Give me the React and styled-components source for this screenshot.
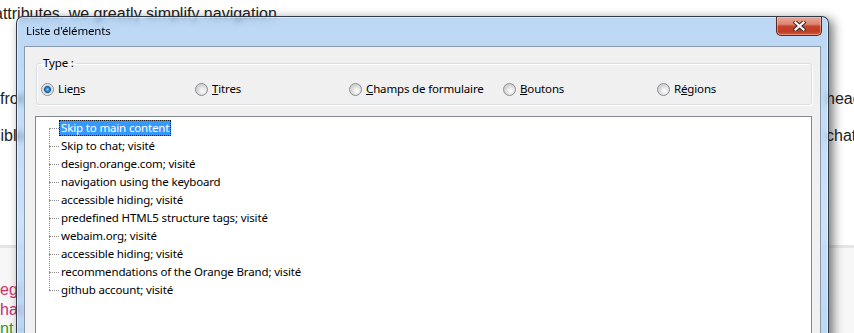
import React from "react";
import styled, { createGlobalStyle } from "styled-components";

const GlobalStyle = createGlobalStyle`
  html, body {
    margin: 0;
    padding: 0;
    background: #fff;
  }
  body {
    width: 854px;
    height: 333px;
    overflow: hidden;
  }
  #root {
    position: relative;
    width: 854px;
    height: 333px;
    overflow: hidden;
  }
`;

/* ---------- page behind the dialog ---------- */

const Page = styled.div`
  height: 333px;
  font-family: "Liberation Sans", Arial, sans-serif;
  font-size: 16px;
  color: #222;
`;

const Article = styled.div`
  height: 245px;
  box-sizing: border-box;
  padding-top: 3px;
  background: #fff;
`;

const Line = styled.p`
  display: grid;
  grid-template-columns: 826px 1fr;
  margin: 0 0 ${(p) => p.$after || 0}px;
  line-height: 22px;
  white-space: nowrap;
`;

const LeftText = styled.span`
  overflow: hidden;
  text-indent: ${(p) => p.$indent || 0}px;
`;

const RightText = styled.span`
  overflow: visible;
`;

const CodeBlock = styled.pre`
  margin: 0;
  height: 88px;
  box-sizing: border-box;
  padding-top: 32px;
  border-top: 3px solid #e6e6e6;
  background: #f7f7f7;
  font-family: "Liberation Sans", Arial, sans-serif;
  font-size: 16px;
  line-height: 19.5px;
`;

const Code = styled.span`
  display: block;
  color: ${(p) => p.$color};
`;

/* ---------- Windows 7 dialog ---------- */

const Window = styled.section`
  position: absolute;
  left: 16px;
  top: 16px;
  width: 813px;
  height: 340px;
  box-sizing: border-box;
  display: flex;
  flex-direction: column;
  border: 1px solid rgba(35, 42, 52, 0.9);
  border-radius: 7px 7px 0 0;
  background: linear-gradient(
    to bottom,
    rgba(150, 192, 238, 0.64),
    rgba(170, 206, 244, 0.6) 60%,
    rgba(152, 196, 244, 0.64)
  );
  backdrop-filter: blur(3px);
  box-shadow: inset 0 0 0 1px rgba(255, 255, 255, 0.5),
    4px 3px 11px rgba(0, 0, 0, 0.55);
  font-family: "Noto Sans", "Open Sans", sans-serif;
  font-size: 11.5px;
  letter-spacing: -0.15px;
  color: #000;
`;

const TitleBar = styled.header`
  display: flex;
  align-items: flex-start;
  height: 29px;
  padding-left: 9px;
`;

const Title = styled.h1`
  margin: 6px 0 0;
  font-size: inherit;
  font-weight: normal;
  line-height: 16px;
`;

const CloseButton = styled.button`
  display: flex;
  align-items: center;
  justify-content: center;
  width: 46px;
  height: 19px;
  margin: 0 6px 0 auto;
  padding: 0;
  border: 1px solid #5b2a22;
  border-top: none;
  border-radius: 0 0 5px 5px;
  background: linear-gradient(
    to bottom,
    #e9a899 0%,
    #dc8470 40%,
    #c5432c 52%,
    #c13c25 80%,
    #d0603f 100%
  );
  box-shadow: inset 0 0 0 1px rgba(255, 210, 200, 0.45);
`;

const Client = styled.div`
  flex: 1;
  margin: 0 7px;
  padding: 8px 8px 0 10px;
  border: 1px solid #8a9bb0;
  border-bottom: none;
  background: #f0f0f0;
`;

const GroupBox = styled.fieldset`
  margin: 0 1px;
  padding: 10px 0 7px 4px;
  border: 1px solid #d5dfe5;
  border-radius: 3px;
  box-shadow: inset 1px 1px 0 #fff, 1px 1px 0 #fff;
`;

const Legend = styled.legend`
  padding: 0 2px;
  line-height: 16px;
`;

const RadioRow = styled.div`
  display: grid;
  grid-template-columns: repeat(5, 154px);
  height: 16px;
`;

const RadioOption = styled.label`
  display: flex;
  align-items: center;
  gap: 4px;
  line-height: 16px;
  white-space: nowrap;
`;

const RadioMark = styled.span`
  flex: none;
  width: 13px;
  height: 13px;
  box-sizing: border-box;
  border-radius: 50%;
  border: 1px solid #8b8e91;
  background: ${(p) =>
    p.$checked
      ? "radial-gradient(circle at 50% 50%, #9bd8fb 0, #3a94d6 1.4px, #1d5a92 3.1px, #c9ced3 3.8px, #f6f6f6 5.6px)"
      : "radial-gradient(circle at 60% 62%, #ffffff 0, #f2f2f2 2px, #d4d4d4 5.6px)"};
`;

const Key = styled.span`
  text-decoration: underline;
`;

const ListBox = styled.div`
  height: 230px;
  margin-top: 11px;
  padding-top: 2px;
  border: 1px solid #828790;
  background: #fff;
`;

const Tree = styled.ul`
  position: relative;
  margin: 0 0 0 13px;
  padding: 0;
  list-style: none;

  &::before {
    content: "";
    position: absolute;
    left: 0;
    top: 9px;
    bottom: 9px;
    border-left: 1px dotted #8c8c8c;
  }
`;

const TreeItem = styled.li`
  display: flex;
  align-items: center;
  height: 18px;

  &::before {
    content: "";
    width: 10px;
    margin-top: 1px;
    border-top: 1px dotted #8c8c8c;
  }
`;

const ItemLabel = styled.span`
  height: 16px;
  box-sizing: border-box;
  padding: 0 1px;
  line-height: 14px;
  white-space: nowrap;
  border: 1px ${(p) => (p.$selected ? "dotted #1a1a1a" : "solid transparent")};
  background: ${(p) => (p.$selected ? "#3399ff" : "transparent")};
  color: ${(p) => (p.$selected ? "#fff" : "#000")};
`;

const types = [
  { label: ["Lie", "n", "s"], checked: true },
  { label: ["", "T", "itres"] },
  { label: ["", "C", "hamps de formulaire"] },
  { label: ["", "B", "outons"] },
  { label: ["R", "é", "gions"] },
];

const links = [
  "Skip to main content",
  "Skip to chat; visité",
  "design.orange.com; visité",
  "navigation using the keyboard",
  "accessible hiding; visité",
  "predefined HTML5 structure tags; visité",
  "webaim.org; visité",
  "accessible hiding; visité",
  "recommendations of the Orange Brand; visité",
  "github account; visité",
];

const CloseGlyph = () => (
  <svg width="13" height="10" viewBox="0 0 13 10">
    <path
      d="M2.5 1.5 L10.5 8.5 M10.5 1.5 L2.5 8.5"
      stroke="#3f2a26"
      strokeWidth="4.2"
      strokeLinecap="square"
    />
    <path
      d="M2.5 1.5 L10.5 8.5 M10.5 1.5 L2.5 8.5"
      stroke="#fff"
      strokeWidth="2.2"
      strokeLinecap="square"
    />
  </svg>
);

export default function App() {
  return (
    <>
      <GlobalStyle />
      <Page>
        <Article>
          <Line $after={63}>
            <LeftText $indent={-6}>attributes, we greatly simplify navigation</LeftText>
            <RightText />
          </Line>
          <Line $after={15}>
            <LeftText>from the main content to the chat and every section</LeftText>
            <RightText>headings</RightText>
          </Line>
          <Line>
            <LeftText $indent={-19}>visible content that screen readers announce to the</LeftText>
            <RightText>chat</RightText>
          </Line>
        </Article>
        <CodeBlock>
          <Code $color="#d0306a">eg: role="navigation"</Code>
          <Code $color="#c0307a">hat-window</Code>
          <Code $color="#2e9a2e">nt --&gt; main content</Code>
        </CodeBlock>
      </Page>

      <Window>
        <TitleBar>
          <Title>Liste d'éléments</Title>
          <CloseButton aria-label="Fermer">
            <CloseGlyph />
          </CloseButton>
        </TitleBar>
        <Client>
          <GroupBox>
            <Legend>Type :</Legend>
            <RadioRow>
              {types.map((t, i) => (
                <RadioOption key={i}>
                  <RadioMark $checked={t.checked} />
                  <span>
                    {t.label[0]}
                    <Key>{t.label[1]}</Key>
                    {t.label[2]}
                  </span>
                </RadioOption>
              ))}
            </RadioRow>
          </GroupBox>
          <ListBox>
            <Tree>
              {links.map((l, i) => (
                <TreeItem key={i}>
                  <ItemLabel $selected={i === 0}>{l}</ItemLabel>
                </TreeItem>
              ))}
            </Tree>
          </ListBox>
        </Client>
      </Window>
    </>
  );
}
